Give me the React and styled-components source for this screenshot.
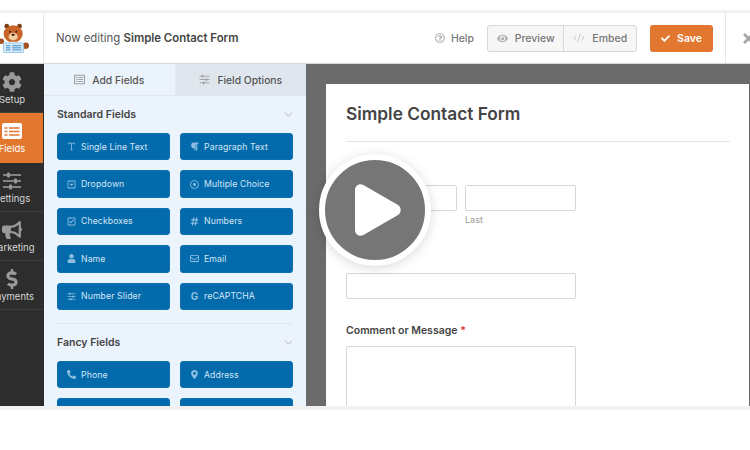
import styled, { createGlobalStyle } from "styled-components";
import {
  FaCog,
  FaBullhorn,
  FaDollarSign,
  FaRegListAlt,
  FaRegCaretSquareDown,
  FaRegDotCircle,
  FaRegCheckSquare,
  FaHashtag,
  FaUser,
  FaRegEnvelope,
  FaParagraph,
  FaPhoneAlt,
  FaMapMarkerAlt,
  FaRegQuestionCircle,
  FaEye,
  FaCheck,
  FaTimes,
} from "react-icons/fa";
import { ChevronDown, CodeXml } from "lucide-react";

const GlobalStyle = createGlobalStyle`
  html, body {
    margin: 0;
    background: #fff;
    overflow: hidden;
  }
  * {
    box-sizing: border-box;
  }
  body {
    font-family: Inter, "Liberation Sans", sans-serif;
    color: #444;
  }
`;

const Builder = styled.div`
  margin-top: 10px;
  width: 750px;
  height: 400px;
  border-top: 3px solid #f1f1f1;
  border-bottom: 4px solid #f1f1f1;
  overflow: hidden;
  display: flex;
  flex-direction: column;
`;

const TopBar = styled.header`
  height: 51px;
  flex-shrink: 0;
  display: flex;
  align-items: center;
  border-bottom: 1px solid #d8d8d8;
`;

const LogoCell = styled.div`
  width: 44px;
  height: 100%;
  flex-shrink: 0;
  border-right: 1px solid #e6e6e6;
  display: flex;
  align-items: flex-end;
  padding-bottom: 10px;
`;

const EditingText = styled.div`
  margin-left: 12px;
  font-size: 11.4px;
  color: #555;
  b {
    font-weight: 600;
    color: #444;
  }
`;

const TopActions = styled.div`
  margin-left: auto;
  display: flex;
  align-items: center;
  height: 100%;
`;

const HelpLink = styled.span`
  display: flex;
  align-items: center;
  gap: 6px;
  font-size: 10.5px;
  font-weight: 500;
  color: #777;
  margin-right: 13px;
  svg {
    color: #a5a5a5;
    font-size: 10px;
  }
`;

const ButtonGroup = styled.div`
  display: flex;
  height: 27px;
  width: 150px;
  border: 1px solid #d8d8d8;
  border-radius: 3px;
  background: #f6f6f6;
`;

const GroupButton = styled.span`
  flex: ${({ $grow }) => $grow};
  display: flex;
  align-items: center;
  justify-content: center;
  gap: 7px;
  font-size: 10.5px;
  font-weight: 500;
  color: #777;
  & + & {
    border-left: 1px solid #d8d8d8;
  }
  svg {
    color: #b0b0b0;
    font-size: 11px;
  }
`;

const SaveButton = styled.span`
  margin-left: 13px;
  width: 63px;
  height: 27px;
  border-radius: 3px;
  background: #e27730;
  color: #fff;
  display: flex;
  align-items: center;
  justify-content: center;
  gap: 7px;
  font-size: 10.5px;
  font-weight: 600;
  svg {
    font-size: 9px;
  }
`;

const CloseCell = styled.div`
  margin-left: 12px;
  width: 25px;
  height: 100%;
  flex-shrink: 0;
  border-left: 1px solid #e6e6e6;
  display: flex;
  align-items: center;
  padding-left: 15px;
  color: #a6a6a6;
  font-size: 15px;
  overflow: hidden;
  svg {
    flex-shrink: 0;
  }
`;

const Workspace = styled.div`
  flex: 1;
  min-height: 0;
  display: flex;
`;

const SideNav = styled.nav`
  width: 44px;
  flex-shrink: 0;
  background: #2d2d2d;
  overflow: hidden;
`;

const NavItem = styled.div`
  width: 62px;
  height: 49.3px;
  margin-left: -19px;
  padding-top: 8px;
  display: flex;
  flex-direction: column;
  align-items: center;
  gap: 2px;
  font-size: 9.5px;
  line-height: 12px;
  white-space: nowrap;
  color: ${({ $active }) => ($active ? "#fff" : "#d5d5d5")};
  background: ${({ $active }) => ($active ? "#e27730" : "transparent")};
  border-bottom: 1px solid ${({ $active }) => ($active ? "#e27730" : "#3d3d3d")};
  svg {
    width: 20px;
    height: 20px;
    flex-shrink: 0;
    color: ${({ $active }) => ($active ? "#fff" : "#999")};
  }
`;

const FieldsPanel = styled.aside`
  width: 262px;
  flex-shrink: 0;
  background: #ebf3fc;
  overflow: hidden;
`;

const Tabs = styled.div`
  display: flex;
  height: 32px;
`;

const Tab = styled.div`
  flex: 1;
  display: flex;
  align-items: center;
  justify-content: center;
  gap: 7px;
  font-size: 10.3px;
  font-weight: 500;
  color: #555;
  background: ${({ $active }) => ($active ? "#ebf3fc" : "#dfe6ee")};
  border-bottom: 1px solid #dfe6ee;
  border-left: ${({ $active }) => ($active ? "none" : "1px solid #e3e9f0")};
  svg {
    width: 11px;
    height: 11px;
    color: #a0a0a0;
  }
`;

const PanelBody = styled.div`
  padding: 0 13px;
`;

const SectionHead = styled.div`
  height: 37px;
  display: flex;
  align-items: center;
  justify-content: space-between;
  font-size: 10.5px;
  font-weight: 600;
  color: #444;
  svg {
    color: #a6a6a6;
    margin-right: -2px;
  }
`;

const FieldGrid = styled.div`
  display: grid;
  grid-template-columns: 113px 113px;
  grid-auto-rows: 27.4px;
  gap: 10px;
`;

const FieldButton = styled.div`
  display: flex;
  align-items: center;
  gap: 5px;
  padding-left: 9px;
  background: #036aab;
  border: 1px solid #0b6fb0;
  border-radius: 3px;
  color: #d3e6f5;
  font-size: 8.7px;
  letter-spacing: 0.1px;
  white-space: nowrap;
  svg {
    width: 9px;
    height: 9px;
    flex-shrink: 0;
    color: #8fc0e4;
  }
`;

const GlyphIcon = styled.span`
  width: 9px;
  flex-shrink: 0;
  font-size: 10px;
  font-weight: 700;
  color: #8fc0e4;
  text-align: center;
`;

const Separator = styled.hr`
  border: none;
  height: 1px;
  background: #dfe7f0;
  margin: 13px 0 0;
`;

const Canvas = styled.main`
  position: relative;
  flex: 1;
  background: #6b6b6b;
  padding: 20px 1px 0 20px;
  overflow: hidden;
`;

const FormSheet = styled.div`
  background: #fff;
  height: 400px;
  padding: 16px 19px 0 20px;
`;

const FormTitle = styled.h1`
  margin: 0;
  padding-bottom: 14px;
  font-size: 17.3px;
  line-height: 27px;
  font-weight: 600;
  color: #444;
  border-bottom: 1px solid #e4e4e4;
`;

const Label = styled.div`
  font-size: 10.5px;
  line-height: 14px;
  font-weight: 600;
  color: #444;
  margin-top: ${({ $top }) => $top}px;
  margin-bottom: ${({ $bottom }) => $bottom}px;
  span {
    color: #d63638;
  }
`;

const NameRow = styled.div`
  display: flex;
  gap: 8px;
`;

const NameCol = styled.div`
  width: ${({ $w }) => $w}px;
`;

const Input = styled.div`
  width: ${({ $w }) => $w}px;
  height: ${({ $h }) => $h}px;
  border: 1px solid #d6d6d6;
  border-radius: 2px;
  background: #fff;
`;

const SubLabel = styled.div`
  font-size: 9px;
  line-height: 12px;
  margin-top: 3px;
  color: #999;
`;

const PlayBadge = styled.div`
  position: absolute;
  left: 13px;
  top: 90px;
  width: 112px;
  height: 112px;
  border-radius: 50%;
  background: #767676;
  border: 6px solid #fff;
  box-shadow: 0 2px 12px rgba(0, 0, 0, 0.15);
  display: flex;
  align-items: center;
  justify-content: center;
  padding-left: 6px;
`;

function TextIcon() {
  return (
    <svg viewBox="0 0 12 12" fill="none" stroke="currentColor" strokeWidth="1.1">
      <path d="M2 3V1.5h8V3M6 1.5v9M4.5 10.5h3" />
    </svg>
  );
}

// thin slider lines with small knobs, used in the nav, the tab and the slider field
function SlidersIcon() {
  return (
    <svg viewBox="0 0 20 20" fill="currentColor">
      <rect x="1" y="3.2" width="18" height="1.6" />
      <rect x="1" y="9.2" width="18" height="1.6" />
      <rect x="1" y="15.2" width="18" height="1.6" />
      <rect x="5" y="1.5" width="3" height="5" rx="1" />
      <rect x="12" y="7.500" width="3" height="5" rx="1" />
      <rect x="7" y="13.500" width="3" height="5" rx="1" />
    </svg>
  );
}

function FormsIcon() {
  return (
    <svg viewBox="0 0 20 20">
      <rect x="0" y="2" width="20" height="16" rx="2" fill="#fff" />
      <path
        d="M2.500 7h3M7 7h10.500M2.500 10.500h3M7 10.500h10.500M2.500 14h3M7 14h10.500"
        stroke="#e27730"
        strokeWidth="1.4"
      />
    </svg>
  );
}

function BearLogo() {
  return (
    <svg width="29" height="30" viewBox="0 0 31 33">
      <circle cx="7" cy="3.500" r="2.600" fill="#7a3d18" />
      <circle cx="21" cy="3.500" r="2.600" fill="#7a3d18" />
      <circle cx="1" cy="20" r="3" fill="#a4501f" />
      <circle cx="28" cy="25" r="3.500" fill="#a4501f" />
      <ellipse cx="14" cy="12" rx="10.500" ry="9.500" fill="#c9652a" />
      <ellipse cx="14" cy="15" rx="5" ry="4.200" fill="#f2cfa0" />
      <circle cx="10.500" cy="9.500" r="1" fill="#2b1a10" />
      <circle cx="17.500" cy="9.500" r="1" fill="#2b1a10" />
      <ellipse cx="14" cy="13" rx="1.800" ry="1.200" fill="#2b1a10" />
      <path d="M10 20.500h8l-4 2.500z" fill="#fff" />
      <rect x="3.500" y="22" width="22" height="10.500" rx="1" fill="#d9ecf8" stroke="#8cc0df" />
      <path d="M6 25h5M13 25h10M6 27.300h5M13 27.300h10M6 29.600h5M13 29.600h10" stroke="#3f8fc6" strokeWidth="1.100" />
    </svg>
  );
}

const standardFields = [
  { label: "Single Line Text", icon: <TextIcon /> },
  { label: "Paragraph Text", icon: <FaParagraph /> },
  { label: "Dropdown", icon: <FaRegCaretSquareDown /> },
  { label: "Multiple Choice", icon: <FaRegDotCircle /> },
  { label: "Checkboxes", icon: <FaRegCheckSquare /> },
  { label: "Numbers", icon: <FaHashtag /> },
  { label: "Name", icon: <FaUser /> },
  { label: "Email", icon: <FaRegEnvelope /> },
  { label: "Number Slider", icon: <SlidersIcon /> },
  { label: "reCAPTCHA", icon: <GlyphIcon>G</GlyphIcon> },
];

const fancyFields = [
  { label: "Phone", icon: <FaPhoneAlt /> },
  { label: "Address", icon: <FaMapMarkerAlt /> },
  { label: "Date / Time", icon: <FaRegListAlt /> },
  { label: "Website / URL", icon: <CodeXml /> },
];

const navItems = [
  { label: "Setup", icon: <FaCog /> },
  { label: "Fields", icon: <FormsIcon />, active: true },
  { label: "Settings", icon: <SlidersIcon /> },
  { label: "Marketing", icon: <FaBullhorn /> },
  { label: "Payments", icon: <FaDollarSign /> },
];

function FieldList({ fields }) {
  return (
    <FieldGrid>
      {fields.map((field) => (
        <FieldButton key={field.label}>
          {field.icon}
          {field.label}
        </FieldButton>
      ))}
    </FieldGrid>
  );
}

export default function App() {
  return (
    <>
      <GlobalStyle />
      <Builder>
        <TopBar>
          <LogoCell>
            <BearLogo />
          </LogoCell>
          <EditingText>
            Now editing <b>Simple Contact Form</b>
          </EditingText>
          <TopActions>
            <HelpLink>
              <FaRegQuestionCircle />
              Help
            </HelpLink>
            <ButtonGroup>
              <GroupButton $grow="77">
                <FaEye />
                Preview
              </GroupButton>
              <GroupButton $grow="73">
                <CodeXml size={12} strokeWidth={1.25} />
                Embed
              </GroupButton>
            </ButtonGroup>
            <SaveButton>
              <FaCheck />
              Save
            </SaveButton>
            <CloseCell>
              <FaTimes />
            </CloseCell>
          </TopActions>
        </TopBar>
        <Workspace>
          <SideNav>
            {navItems.map((item) => (
              <NavItem key={item.label} $active={item.active}>
                {item.icon}
                {item.label}
              </NavItem>
            ))}
          </SideNav>
          <FieldsPanel>
            <Tabs>
              <Tab $active>
                <FaRegListAlt />
                Add Fields
              </Tab>
              <Tab>
                <SlidersIcon />
                Field Options
              </Tab>
            </Tabs>
            <PanelBody>
              <SectionHead>
                Standard Fields
                <ChevronDown size={13} strokeWidth={1.5} />
              </SectionHead>
              <FieldList fields={standardFields} />
              <Separator />
              <SectionHead>
                Fancy Fields
                <ChevronDown size={13} strokeWidth={1.5} />
              </SectionHead>
              <FieldList fields={fancyFields} />
            </PanelBody>
          </FieldsPanel>
          <Canvas>
            <FormSheet>
              <FormTitle>Simple Contact Form</FormTitle>
              <Label $top={18} $bottom={11}>
                Name <span>*</span>
              </Label>
              <NameRow>
                <NameCol $w={111}>
                  <Input $w={111} $h={26} />
                  <SubLabel>First</SubLabel>
                </NameCol>
                <NameCol $w={111}>
                  <Input $w={111} $h={26} />
                  <SubLabel>Last</SubLabel>
                </NameCol>
              </NameRow>
              <Label $top={22} $bottom={11}>
                Email <span>*</span>
              </Label>
              <Input $w={230} $h={26} />
              <Label $top={25} $bottom={8}>
                Comment or Message <span>*</span>
              </Label>
              <Input $w={230} $h={120} />
            </FormSheet>
            <PlayBadge>
              <svg width="46" height="52" viewBox="0 0 46 52">
                <path
                  d="M0 6C0 1.500 4.500-1.200 8.400 1L43 21c3.600 2.200 3.600 7.800 0 10L8.400 51C4.500 53.200 0 50.500 0 46z"
                  fill="#fff"
                />
              </svg>
            </PlayBadge>
          </Canvas>
        </Workspace>
      </Builder>
    </>
  );
}
